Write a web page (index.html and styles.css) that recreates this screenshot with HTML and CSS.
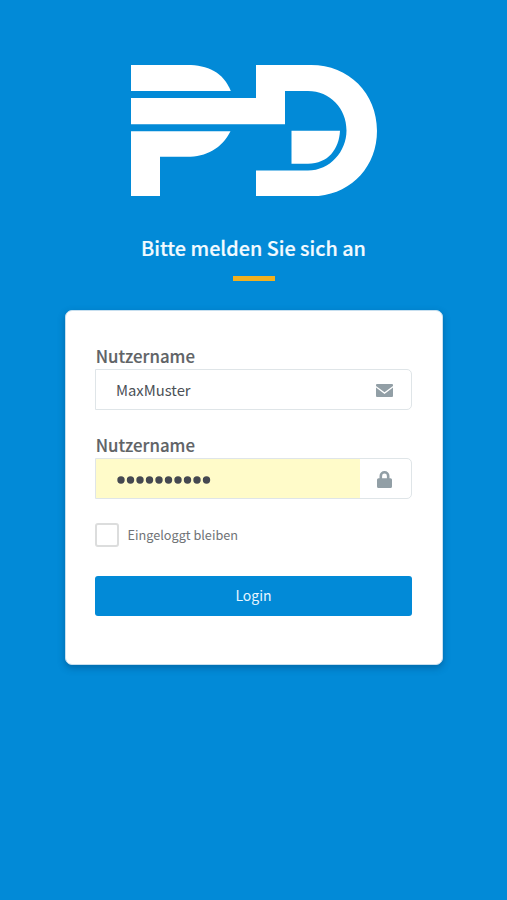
FILE: index.html
```html
<!DOCTYPE html>
<html lang="de">
<head>
<meta charset="utf-8">
<meta name="viewport" content="width=device-width, initial-scale=1">
<title>Login</title>
<link rel="stylesheet" href="styles.css">
</head>
<body>
<main class="page">
  <svg class="logo" viewBox="131 64.6 246 131.4" role="img" aria-label="PD">
    <path d="M131 64.7H187C208 64.7 223 72 230.8 90.5H131Z"/>
    <path d="M131 97.7H256V64.7H311C349 64.7 377 93 377 130.4C377 168 349 196 311 196H256V170H308C330 170 346.5 151 346.5 130C346.5 108 330 90.7 308 90.7H285V123.8H131Z"/>
    <path d="M131 130.8H230.5C222 148 206 156.4 187 156.4H160V196H131Z"/>
    <path d="M291.5 130.4H340C339 149 328 163.3 308 163.3H291.5Z"/>
  </svg>
  <h1 class="title">Bitte melden Sie sich an</h1>
  <div class="accent"></div>
  <form class="card">
    <label class="label" for="user">Nutzername</label>
    <div class="field">
      <input class="input" id="user" type="text" value="MaxMuster">
      <span class="addon"><svg class="mail" viewBox="0 0 17 13"><path d="M1 0H16Q17 0 17 1V2L8.5 8.3L0 2V1Q0 0 1 0ZM0 3.6L8.5 10L17 3.6V12Q17 13 16 13H1Q0 13 0 12Z"/></svg></span>
    </div>
    <label class="label" for="pass">Nutzername</label>
    <div class="field">
      <div class="input filled" id="pass"><svg class="dots" viewBox="0 0 94 8"><circle cx="4" cy="4" r="3.7"/><circle cx="13.5" cy="4" r="3.7"/><circle cx="23" cy="4" r="3.7"/><circle cx="32.5" cy="4" r="3.7"/><circle cx="42" cy="4" r="3.7"/><circle cx="51.5" cy="4" r="3.7"/><circle cx="61" cy="4" r="3.7"/><circle cx="70.5" cy="4" r="3.7"/><circle cx="80" cy="4" r="3.7"/><circle cx="89.5" cy="4" r="3.7"/></svg></div>
      <span class="addon"><svg class="lock" viewBox="0 0 15 17"><path fill-rule="evenodd" d="M2.5 7.3V5A5 5 0 0 1 12.5 5V7.3H13.5Q15 7.3 15 8.8V15.5Q15 17 13.5 17H1.5Q0 17 0 15.5V8.8Q0 7.3 1.5 7.3ZM5.1 7.3H9.9V5A2.4 2.4 0 0 0 5.1 5Z"/></svg></span>
    </div>
    <label class="remember"><input class="check" type="checkbox"><span class="remember-text">Eingeloggt bleiben</span></label>
    <button class="button" type="button">Login</button>
  </form>
</main>
</body>
</html>
```

FILE: styles.css
```css
* { box-sizing: border-box; }
body {
  margin: 0;
  background: #028ad7;
  font-family: "Noto Sans CJK SC", "Noto Sans", sans-serif;
}
.page {
  min-height: 900px;
  padding-top: 64.6px;
  display: flex;
  flex-direction: column;
  align-items: center;
}
.logo { width: 246px; height: 131.4px; fill: #fff; }
.title {
  margin: 37px 0 0;
  height: 30px;
  font-size: 19.8px;
  line-height: 30px;
  font-weight: 500;
  -webkit-text-stroke: .2px currentColor;
  color: #f2faff;
  white-space: nowrap;
}
.accent { width: 42px; height: 5px; margin-top: 13px; background: #f2b01e; }
.card {
  width: 378px;
  height: 355px;
  margin-top: 29px;
  padding: 34px 30px 0 29.5px;
  border: 1px solid #c7dfef;
  border-radius: 7px;
  background: #fff;
  box-shadow: 0 3px 7px rgba(0, 45, 85, .35);
}
.label {
  display: block;
  height: 24px;
  padding-left: .7px;
  font-size: 16.8px;
  line-height: 22px;
  font-weight: 500;
  -webkit-text-stroke: .15px currentColor;
  color: #606366;
}
.field {
  display: flex;
  width: 317px;
  height: 41px;
  margin-bottom: 24px;
  border: 1px solid #dfe5e8;
  border-radius: 0 5px 5px 0;
  overflow: hidden;
}
.input {
  width: 264px;
  height: 39px;
  padding: 0 20px;
  border: 0;
  outline: 0;
  background: #fff;
  font: 400 14.8px "Noto Sans CJK SC", "Noto Sans", sans-serif;
  color: #4b5056;
}
.filled { display: flex; align-items: center; padding: 3px 20px 0 20.5px; background: #fffbc9; }
.dots { width: 94px; height: 8px; fill: #454850; }
.addon { flex: 1; display: flex; align-items: center; justify-content: center; padding: 2px 2px 0 0; fill: #929fa6; }
.mail { width: 17px; height: 13px; }
.lock { width: 15px; height: 17px; }
.remember {
  display: flex;
  align-items: center;
  gap: 8.5px;
  height: 24px;
  margin-top: 24.5px;
  font-size: 12.7px;
  line-height: 20px;
  color: #707376;
}
.remember-text { padding-bottom: 1px; }
.check {
  appearance: none;
  width: 24px;
  height: 24px;
  margin: 0;
  border: 2px solid #dcdddd;
  border-radius: 3px;
  background: #fff;
}
.button {
  display: block;
  width: 317px;
  height: 40px;
  margin-top: 28.5px;
  padding: 0 0 2px;
  border: 0;
  border-radius: 3px;
  background: #028ad7;
  font: 400 14px "Noto Sans CJK SC", "Noto Sans", sans-serif;
  color: #e8f6ff;
}
```
